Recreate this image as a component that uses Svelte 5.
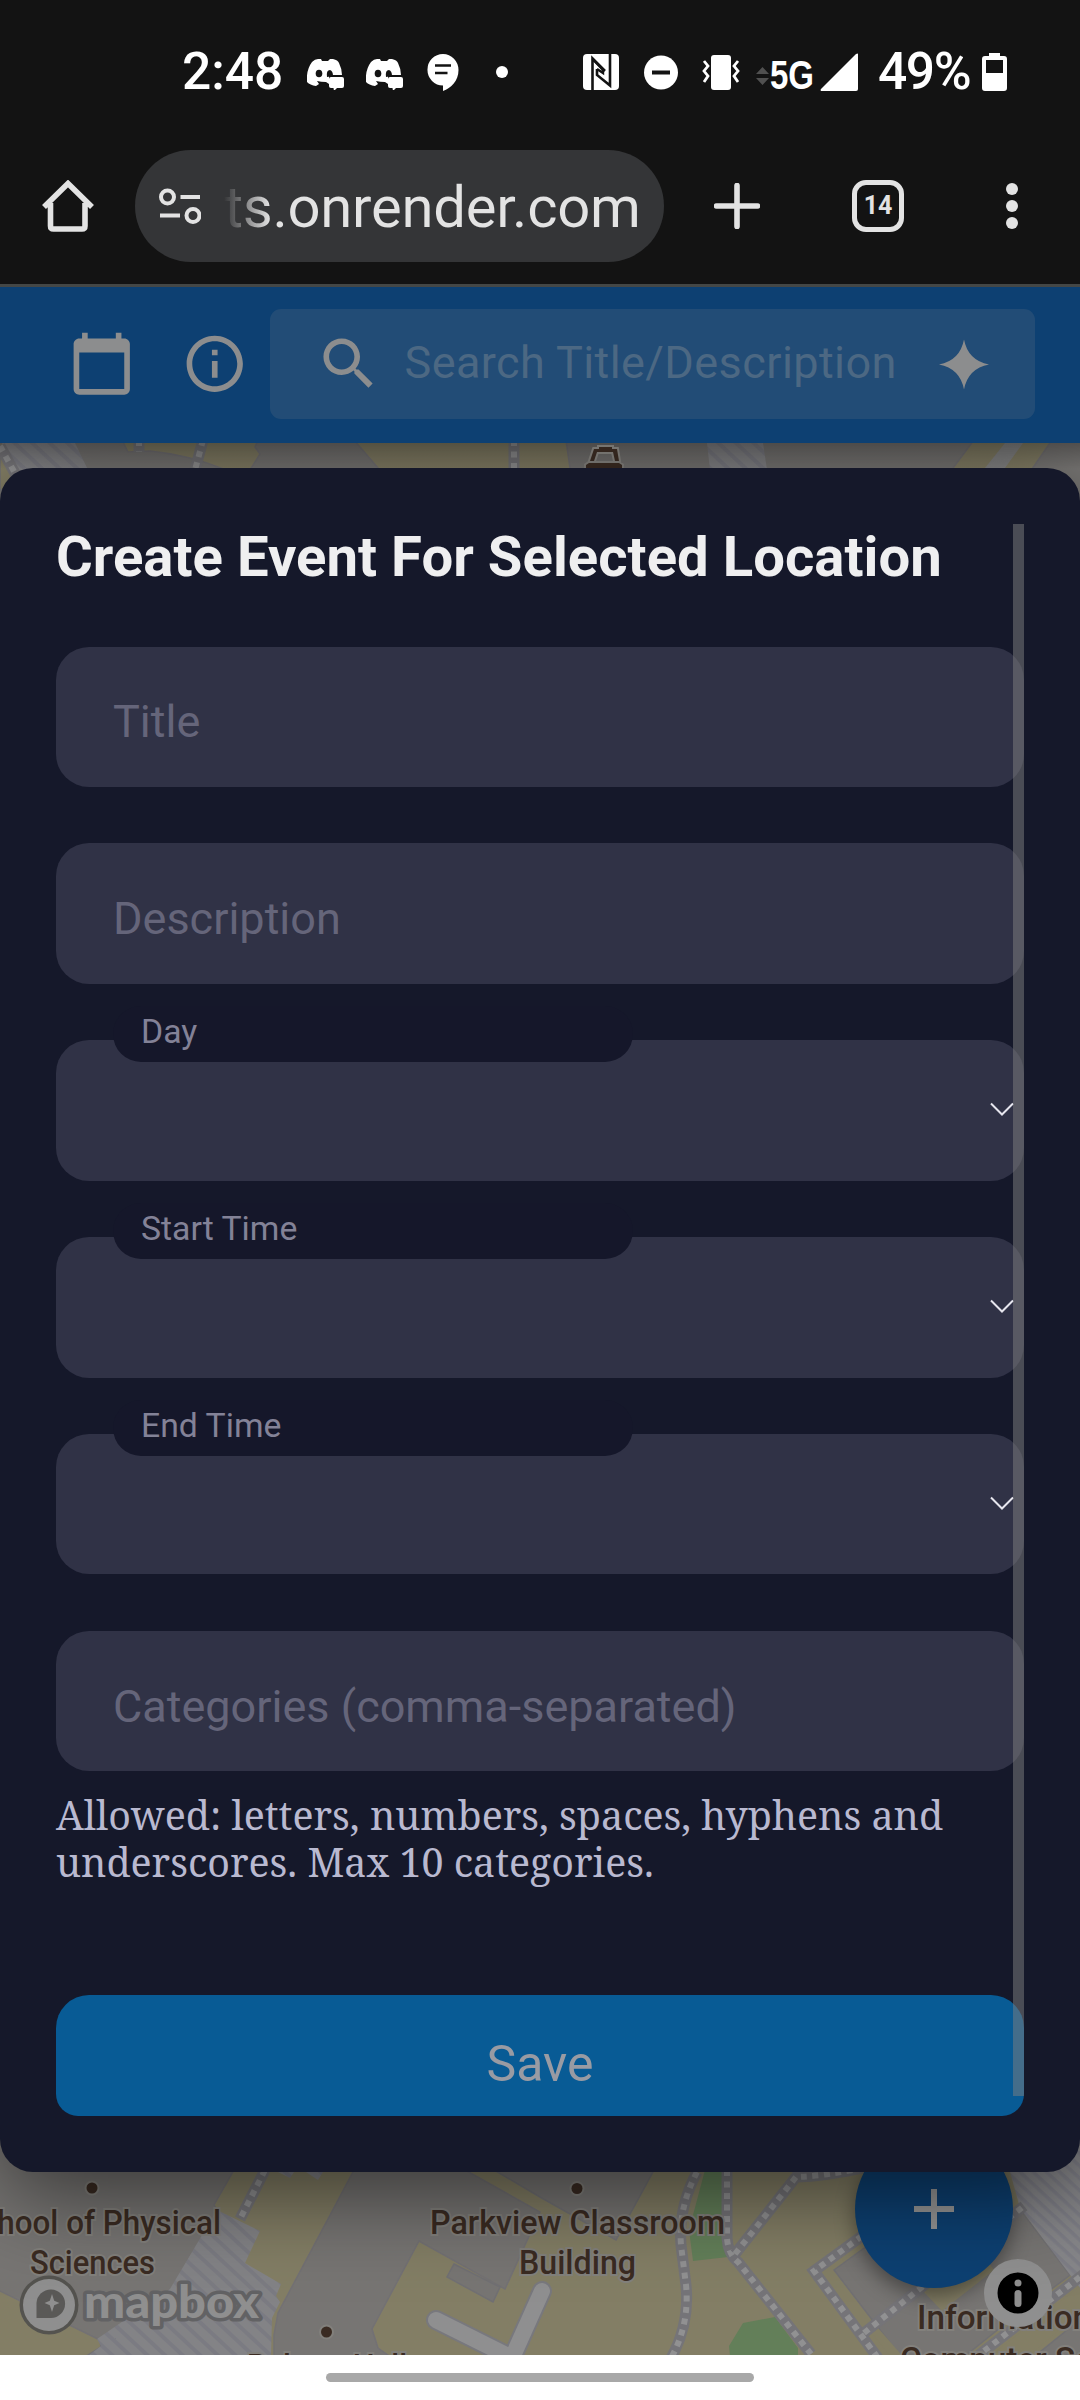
<script>
	let title = '';
	let description = '';
	let categories = '';

	const pickers = ['Day', 'Start Time', 'End Time'];

	// dashed footpaths on the campus map
	const paths = [
		'M0 446L22 486',
		'M139 440V452',
		'M203 440L195 470',
		'M514 440V470',
		'M265 2170L240 2219',
		'M697 2172Q678 2208 681 2245L686 2285Q690 2325 670 2360',
		'M727 2170V2238Q728 2254 738 2262L811 2354',
		'M735 2254L796 2177Q825 2176 862 2168',
		'M862 2236L814 2271L878 2358',
		'M864 2333L1024 2206',
		'M975 2358L1085 2273',
	];

	const labels = [
		{ text: 'School of Physical', x: -38, y: 2234, width: 259 },
		{ text: 'Sciences', x: 30, y: 2274, width: 125 },
		{ text: 'Parkview Classroom', x: 430, y: 2234, width: 295 },
		{ text: 'Building', x: 519, y: 2274, width: 117 },
		{ text: 'Information', x: 917, y: 2329, width: 174 },
		{ text: 'Computer Science', x: 900, y: 2371, width: 272 },
		{ text: 'Palmer Hall', x: 247, y: 2378, width: 160 },
	];
</script>

<svelte:head>
	<title>Create Event</title>
</svelte:head>

<div class="phone">
	<header class="status">
		<span class="clock">2:48</span>
		<div class="notifications">
			{#each [1, 2] as n (n)}
				<svg width="37" height="32" viewBox="0 0 37 32">
					<path fill="#fff" d="M11 1L14 1L15 3H21L23 1L26 1Q31 2 32 5Q35 11 35 17H22V26L19 24Q14 24 10 23L12 26L9 28Q3 27 0 24Q-1 12 5 4Q8 1 11 1Z" />
					<ellipse cx="12" cy="15.5" rx="3.3" ry="3.8" fill="#131313" />
					<path d="M20 19Q19 12 23 12Q26 13 26 18" fill="#131313" />
					<path fill="#fff" d="M24 19H35Q37 19 37 21V28Q37 30 35 30H30L27 33L26.500 30H24Q22 30 22 28V21Q22 19 24 19Z" />
				</svg>
			{/each}
			<svg class="chat" width="32" height="37" viewBox="0 0 32 37">
				<path fill="#fff" d="M16 0A15.500 16 0 0 1 31.500 16C31.500 27 24 34 16 37V31.500A15.500 15.700 0 0 1 16 0Z" />
				<path d="M8 11.500H24M8 19H20.500" stroke="#131313" stroke-width="2.600" />
			</svg>
			<svg class="more" width="12" height="12"><circle cx="6" cy="6" r="6" fill="#fff" /></svg>
		</div>
		<div class="system">
			<svg width="36" height="36" viewBox="0 0 36 36">
				<rect width="36" height="36" rx="4" fill="#fff" />
				<path d="M9.500 36V4.500L22 17M14 15V21L27 31.500V0" fill="none" stroke="#131313" stroke-width="2.600" />
				<path d="M9.500 5L20 16V19L14 15" fill="none" stroke="#131313" stroke-width="2.400" />
			</svg>
			<svg class="dnd" width="34" height="35" viewBox="0 0 34 35">
				<circle cx="17" cy="17.500" r="17" fill="#fff" />
				<path d="M8 17.500H26" stroke="#131313" stroke-width="4" />
			</svg>
			<svg class="vibrate" width="38" height="35" viewBox="0 0 38 35">
				<rect x="9" width="20" height="35" rx="3" fill="#fff" />
				<path d="M2 6L6 11L2 16L6 21L2 27M36 6L32 11L36 16L32 21L36 27" fill="none" stroke="#fff" stroke-width="2.800" />
			</svg>
			<svg class="data" width="13" height="18" viewBox="0 0 13 18"><path d="M0 7L6.500 0L13 7ZM0 11H13L6.500 18Z" fill="#505050" /></svg>
			<svg class="network" width="44" height="34">
				<text x="0" y="31" textLength="44" lengthAdjust="spacingAndGlyphs">5G</text>
			</svg>
			<svg class="signal" width="38" height="38" viewBox="0 0 38 38"><path d="M38 1V36Q38 38 36 38H1Q0 37 1 36L36 1Q38 0 38 1Z" fill="#fff" /></svg>
			<span class="percent">49%</span>
			<svg class="battery" width="25" height="38" viewBox="0 0 25 38">
				<path fill="#fff" fill-rule="evenodd" d="M7 0H18V3H22Q25 3 25 6V35Q25 38 22 38H3Q0 38 0 35V6Q0 3 3 3H7ZM4 7V20H21V7Z" />
			</svg>
		</div>
	</header>

	<nav class="browser">
		<svg class="home" width="52" height="52" viewBox="0 0 52 52">
			<path d="M2 27L26 3.500L50 27M8.500 23V46Q8.500 49 11.500 49H40Q43 49 43 46V23" fill="none" stroke="#e3e3e3" stroke-width="5.600" />
		</svg>
		<div class="url">
			<svg width="42" height="37" viewBox="0 0 42 37" fill="none" stroke="#e3e3e3" stroke-width="4">
				<circle cx="8.500" cy="9" r="6.500" />
				<circle cx="34" cy="27.500" r="6.500" />
				<path d="M21.500 9H41M1 27.500H21" />
			</svg>
			<span>ts.onrender.com</span>
		</div>
		<svg class="new-tab" width="46" height="46" viewBox="0 0 46 46">
			<path d="M23 2.500V43.500M2.500 23H43.500" stroke="#e3e3e3" stroke-width="5.600" stroke-linecap="round" />
		</svg>
		<div class="tabs">14</div>
		<svg class="kebab" width="12" height="46" fill="#e3e3e3">
			<circle cx="6" cy="6" r="6" />
			<circle cx="6" cy="23" r="6" />
			<circle cx="6" cy="40" r="6" />
		</svg>
	</nav>

	<div class="appbar">
		<svg viewBox="0 0 24 24"><path d="M20 3h-1V1h-2v2H7V1H5v2H4c-1.100 0-2 .9-2 2v16c0 1.100.9 2 2 2h16c1.100 0 2-.9 2-2V5c0-1.100-.9-2-2-2zm0 18H4V8h16v13z" /></svg>
		<svg class="about" viewBox="0 0 24 24"><path d="M11 7h2v2h-2zm0 4h2v6h-2zm1-9C6.480 2 2 6.480 2 12s4.480 10 10 10 10-4.480 10-10S17.520 2 12 2zm0 18c-4.410 0-8-3.590-8-8s3.590-8 8-8 8 3.590 8 8-3.590 8-8 8z" /></svg>
		<div class="search">
			<svg viewBox="0 0 24 24"><path d="M15.500 14h-.79l-.28-.27C15.410 12.590 16 11.110 16 9.500 16 5.910 13.090 3 9.500 3S3 5.910 3 9.500 5.910 16 9.500 16c1.610 0 3.090-.59 4.230-1.570l.27.28v.79l5 4.990L20.490 19l-4.990-5zm-6 0C7.010 14 5 11.990 5 9.500S7.010 5 9.500 5 14 7.010 14 9.500 11.990 14 9.500 14z" /></svg>
			<span>Search Title/Description</span>
			<svg class="spark" viewBox="0 0 50 50"><path d="M25 0Q29 21 50 25Q29 29 25 50Q21 29 0 25Q21 21 25 0Z" /></svg>
		</div>
	</div>

	<main>
		<svg class="map" viewBox="0 443 1080 1912">
			<defs>
				<pattern id="hatch" width="12" height="12" patternUnits="userSpaceOnUse" patternTransform="rotate(43)">
					<rect width="12" height="12" fill="#838386" />
					<rect width="12" height="4" fill="#7b7b82" />
				</pattern>
				<pattern id="hatch-fine" width="9" height="9" patternUnits="userSpaceOnUse" patternTransform="rotate(43)">
					<rect width="9" height="9" fill="#868689" />
					<rect width="9" height="3.500" fill="#7d7d85" />
				</pattern>
				<linearGradient id="bar-shade" x2="0" y2="1">
					<stop stop-opacity=".3" />
					<stop offset="1" stop-opacity="0" />
				</linearGradient>
			</defs>
			<rect y="443" width="1080" height="1912" fill="#777573" />
			<g fill="#837e65" stroke="#737174" stroke-width="1.500">
				<path d="M0 443H2L24 490H0Z" />
				<path d="M122 440H258L255 447L260 454L250 470H226Q190 455 150 451L128 452Z" />
				<path d="M354 440H566L571 475H384Z" />
				<path d="M974 440H1052L1030 472H950Z" />
				<path d="M234 2170H354L278 2313L274 2335V2360H240L217 2210L214 2205Z" />
				<path d="M-2 2290L100 2340L101 2347L80 2360H-2Z" />
				<path d="M465 2170L540 2212L505 2289L419 2241L372 2329L378 2348L392 2358H1082V2170Z" />
			</g>
			<g fill="#777573" stroke="#717073" stroke-width="1.500">
				<path d="M494 2170H654L616 2240L540 2197Z" />
				<path d="M454 2264L500 2287L493 2302L447 2277Z" />
				<path d="M834 2270L900 2222L990 2240L1022 2212L1070 2275L1000 2328L960 2360H903Z" />
				<path d="M1030 2360L1082 2318V2360Z" />
			</g>
			<path d="M922 2290L942 2311L994 2270L984 2256ZM872 2333L878 2328L906 2360H893ZM990 2356L1080 2286V2312L1024 2360Z" fill="#837e65" />
			<path d="M2 443H75L89 472L20 485Z" fill="url(#hatch)" />
			<path d="M707 443H763L767 470H710ZM217 2210L260 2231L245 2263L281 2284L276 2296L280 2302L272 2318L271 2356H88L101 2346L97 2339L170 2289ZM278 2172L290 2178L294 2172ZM306 2172L318 2180L323 2172Z" fill="url(#hatch)" />
			<path d="M1010 2172L1080 2130V2288L1020 2208Z" fill="url(#hatch-fine)" />
			<path d="M1005 443H1023L1005 468H985Z" fill="#858585" />
			<path d="M705 2170H723V2230L728 2257L693 2261L689 2230ZM729 2346L743 2323L775 2317L798 2348V2356H730Z" fill="#637f59" />
			<g fill="none" stroke-linecap="round" stroke-linejoin="round">
				<path d="M436 2320L512 2358L542 2291" stroke="#78787d" stroke-width="20" />
				<path d="M436 2320L512 2358L542 2291" stroke="#8f8f90" stroke-width="16" />
			</g>
			{#each paths as d}
				<path {d} fill="none" stroke="#757478" stroke-width="11" />
				<path {d} fill="none" stroke="#919192" stroke-width="6" stroke-dasharray="6 5.500" />
			{/each}
			<rect y="443" width="1080" height="26" fill="url(#bar-shade)" />

			<g class="poi">
				<circle cx="92" cy="2188" r="5.500" />
				<circle cx="577" cy="2188.500" r="5.500" />
				<circle cx="326.500" cy="2332" r="5.500" />
				<path d="M590 461L594 449H599V447H612V449H617L619 461H615L613 452H597L594 461ZM586 470V465L589 463H619L622 465V470Z" />
				{#each labels as label}
					<text x={label.x} y={label.y} textLength={label.width} lengthAdjust="spacingAndGlyphs">{label.text}</text>
				{/each}
			</g>

			<g>
				<circle cx="49" cy="2305" r="29.500" fill="#54534f" />
				<circle cx="49" cy="2305" r="26" fill="#8f8f8f" />
				<path d="M36.500 2318V2303A14.300 14.300 0 1 1 51 2318Z" fill="#5a5957" />
				<path d="M52 2294L54.200 2300.800L59.500 2303L54.200 2305.200L52 2312L49.800 2305.200L44.500 2303L49.800 2300.800Z" fill="#8f8f8f" />
				<text class="wordmark" x="84" y="2318" textLength="175" lengthAdjust="spacingAndGlyphs">mapbox</text>
			</g>
		</svg>

		<button class="fab" type="button" aria-label="Add event">
			<svg width="40" height="40" viewBox="0 0 40 40"><path d="M20 0V40M0 20H40" stroke="#969696" stroke-width="6" /></svg>
		</button>
		<svg class="attribution" width="68" height="68" viewBox="0 0 68 68">
			<circle cx="34" cy="34" r="34" fill="#8f8f8f" />
			<circle cx="34" cy="34" r="20.500" />
			<circle cx="34" cy="24" r="3.500" fill="#8f8f8f" />
			<path d="M34 34.500V44.500" stroke="#8f8f8f" stroke-width="7" stroke-linecap="round" />
		</svg>

		<form class="modal" on:submit|preventDefault>
			<h1>Create Event For Selected Location</h1>
			<input placeholder="Title" bind:value={title} />
			<input placeholder="Description" bind:value={description} />
			{#each pickers as name}
				<div class="picker">
					<span class="label">{name}</span>
					<svg width="24" height="16" viewBox="0 0 24 16"><path d="M1 1.500L12 12.500L23 1.500" fill="none" stroke="#e6e6ee" stroke-width="2" /></svg>
				</div>
			{/each}
			<input placeholder="Categories (comma-separated)" bind:value={categories} />
			<p>Allowed: letters, numbers, spaces, hyphens and<br />underscores. Max 10 categories.</p>
			<button class="save">Save</button>
			<div class="scrollbar"></div>
		</form>
	</main>

	<footer><div class="handle"></div></footer>
</div>

<style>
:global(body) {
	margin: 0;
}
.phone {
	width: 1080px;
	height: 2400px;
	display: flex;
	flex-direction: column;
	overflow: hidden;
	background: #131313;
	font-family: Roboto, sans-serif;
}
svg {
	display: block;
	flex: none;
}
.status {
	height: 144px;
	flex: none;
	box-sizing: border-box;
	padding: 0 73px 0 182px;
	display: flex;
	align-items: center;
	color: #fff;
	font-size: 51.5px;
	font-weight: 500;
	line-height: 60px;
}
.clock {
	width: 125px;
}
.notifications {
	display: flex;
	align-items: center;
	gap: 22px;
	padding-top: 4px;
}
.chat {
	margin: -4px 0 0 2px;
}
.more {
	margin: -4px 0 0 15px;
}
.system {
	margin-left: auto;
	display: flex;
	align-items: center;
}
.dnd {
	margin-left: 25px;
}
.vibrate {
	margin-left: 24px;
}
.data {
	margin: 8px 1px 0 16px;
}
.network {
	padding-top: 6px;
	font: bold 41px 'Liberation Sans', sans-serif;
	fill: #fff;
}
.signal {
	margin-left: 6px;
}
.percent {
	width: 92px;
	margin-left: 20px;
	letter-spacing: -1.4px;
}
.battery {
	margin-left: 12px;
}
.browser {
	height: 143px;
	flex: none;
	box-sizing: border-box;
	padding: 6px 62px 22px 42px;
	display: flex;
	align-items: center;
	border-bottom: 3px solid #444746;
}
.home {
	margin-right: 41px;
}
.url {
	width: 529px;
	height: 112px;
	box-sizing: border-box;
	padding-left: 24px;
	border-radius: 56px;
	background: #343537;
	display: flex;
	align-items: center;
	gap: 24px;
}
.url span {
	color: transparent;
	background: linear-gradient(90deg, #343537, #e3e3e3 46px);
	background-clip: text;
	-webkit-background-clip: text;
	font-size: 58px;
	letter-spacing: -0.25px;
	line-height: 70px;
	white-space: nowrap;
	padding-top: 2px;
	margin-left: -1px;
}
.new-tab {
	margin: 0 92px 0 50px;
}
.tabs {
	width: 52px;
	height: 52px;
	box-sizing: border-box;
	border: 5.6px solid #e3e3e3;
	border-radius: 14px;
	color: #e3e3e3;
	font-size: 25px;
	font-weight: 700;
	line-height: 42px;
	text-align: center;
}
.kebab {
	margin-left: auto;
}
.appbar {
	height: 156px;
	flex: none;
	box-sizing: border-box;
	padding: 0 45px 2px 68px;
	display: flex;
	align-items: center;
	background: #0d4072;
}
.appbar svg {
	width: 67.5px;
	height: 67.5px;
	fill: #8c8d8e;
}
.about {
	margin: 0 22px 0 45px;
}
.search {
	flex: 1;
	height: 110px;
	box-sizing: border-box;
	padding: 0 46px 0 45px;
	border-radius: 11px;
	background: #224c76;
	display: flex;
	align-items: center;
}
.search span {
	margin: -3px auto 0 22px;
	color: #4c6883;
	font-size: 45px;
	letter-spacing: 0.42px;
	white-space: nowrap;
}
.search .spark {
	width: 50px;
	height: 51px;
}
main {
	position: relative;
	flex: 1;
	overflow: hidden;
	padding-top: 25px;
}
.map {
	position: absolute;
	inset: 0;
	width: 1080px;
	height: 1912px;
}
.poi {
	font-size: 34px;
	font-weight: 500;
	fill: #3a2b22;
	stroke: #82807c;
	stroke-width: 4px;
	paint-order: stroke;
}
.wordmark {
	font: 900 45px Lato, sans-serif;
	fill: #8f8f8f;
	stroke: #626264;
	stroke-width: 7px;
	stroke-linejoin: round;
	paint-order: stroke;
}
.fab {
	position: absolute;
	left: 855px;
	top: 1687px;
	width: 158px;
	height: 158px;
	border: 0;
	border-radius: 50%;
	background: #0d4072;
	display: grid;
	place-items: center;
	box-shadow: 0 8px 20px rgba(0, 0, 0, 0.4);
}
.attribution {
	position: absolute;
	left: 984px;
	top: 1816px;
}
.modal {
	position: relative;
	height: 1704px;
	box-sizing: border-box;
	padding: 56px;
	display: flex;
	flex-direction: column;
	border-radius: 33px;
	background: #15182a;
	box-shadow: 0 22px 90px rgba(0, 0, 0, 0.55);
}
h1 {
	margin: 0 0 56.5px;
	color: #efeff0;
	font-size: 56.25px;
	font-weight: 700;
	letter-spacing: 0.03px;
	line-height: 66px;
	white-space: nowrap;
}
input,
.picker {
	height: 140.6px;
	box-sizing: border-box;
	flex: none;
	margin: 0 0 56.25px;
	padding: 10px 56px 0 57px;
	border: 0;
	border-radius: 33px;
	background: #303246;
	color: #efeff0;
	font: 45px Roboto, sans-serif;
}
input::placeholder {
	color: #65657a;
	opacity: 1;
}
.picker {
	position: relative;
	padding: 0 10px 0 57px;
	display: flex;
	align-items: center;
	justify-content: space-between;
}
.label {
	width: 520px;
	height: 56px;
	box-sizing: border-box;
	align-self: flex-start;
	margin-top: -34px;
	padding-left: 28px;
	border-radius: 28px;
	background: #15172a;
	color: #838297;
	font-size: 33.75px;
	line-height: 52px;
}
p {
	margin: -36px 0 109px;
	color: #b9b9d0;
	font: 39.375px/47px 'Noto Serif', 'DejaVu Serif Condensed', 'DejaVu Serif', serif;
	white-space: nowrap;
}
.save {
	height: 121px;
	flex: none;
	padding: 18px 0 0;
	border: 0;
	border-radius: 33px 33px 22px 22px;
	background: #085b95;
	color: #999ba3;
	font: 50px Roboto, sans-serif;
}
.scrollbar {
	position: absolute;
	top: 56px;
	right: 56px;
	width: 11px;
	height: 1572px;
	background: rgba(128, 128, 128, 0.5);
}
footer {
	height: 45px;
	flex: none;
	display: grid;
	place-items: center;
	background: #fff;
}
.handle {
	width: 428px;
	height: 9px;
	border-radius: 5px;
	background: #a8a8a8;
}
</style>
